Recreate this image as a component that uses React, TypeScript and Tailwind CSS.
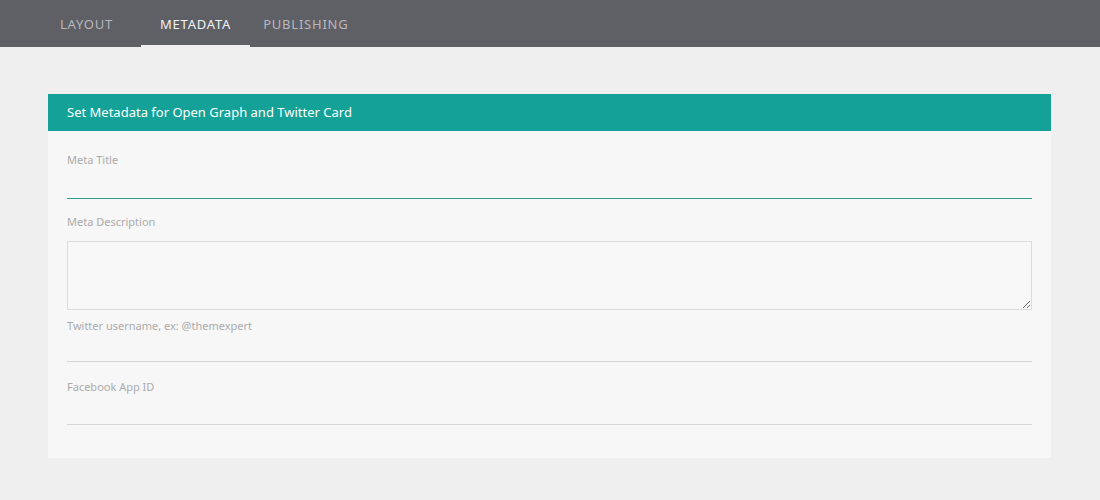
import React from "react";

const font = { fontFamily: '"Noto Sans", "Open Sans", sans-serif' };

function Tabs() {
  return (
    <div className="h-[47px] bg-[#5f5f66] flex pl-[60px] text-[13px] tracking-[0.06em]">
      <div className="h-full flex items-center pt-[4px] text-[#b8b8bc] border-b-2 border-transparent">
        LAYOUT
      </div>
      <div className="ml-[28px] px-[19px] h-full flex items-center pt-[4px] text-[#f2f2f2] border-b-2 border-[#f0f0f0]">
        METADATA
      </div>
      <div className="ml-[13px] h-full flex items-center pt-[4px] text-[#b8b8bc] border-b-2 border-transparent">
        PUBLISHING
      </div>
    </div>
  );
}

function Label({ children }: { children: React.ReactNode }) {
  return <div className="text-[11px] text-[#ababab] leading-[14px]">{children}</div>;
}

export default function App() {
  return (
    <div className="w-[1100px] h-[500px] bg-[#efefef] overflow-hidden" style={font}>
      <Tabs />
      <div className="px-[48px] pt-[47px]">
        <div className="w-[1003px] bg-[#f7f7f7]">
          <div className="h-[37px] bg-[#14a197] flex items-center px-[19px] text-[13px] text-white">
            Set Metadata for Open Graph and Twitter Card
          </div>
          <div className="px-[19px] pt-[22px] pb-[33px]">
            <Label>Meta Title</Label>
            <div className="h-[32px] border-b border-[#2f9a8e]" />
            <div className="pt-[16px]">
              <Label>Meta Description</Label>
            </div>
            <textarea className="mt-[12px] block w-full h-[69px] border border-[#dcdcdc] bg-[#f8f8f8] resize-y outline-none" />
            <div className="pt-[9px]">
              <Label>Twitter username, ex: @themexpert</Label>
            </div>
            <div className="h-[29px] border-b border-[#d6d6d6]" />
            <div className="pt-[18px]">
              <Label>Facebook App ID</Label>
            </div>
            <div className="h-[31px] border-b border-[#d6d6d6]" />
          </div>
        </div>
      </div>
    </div>
  );
}
